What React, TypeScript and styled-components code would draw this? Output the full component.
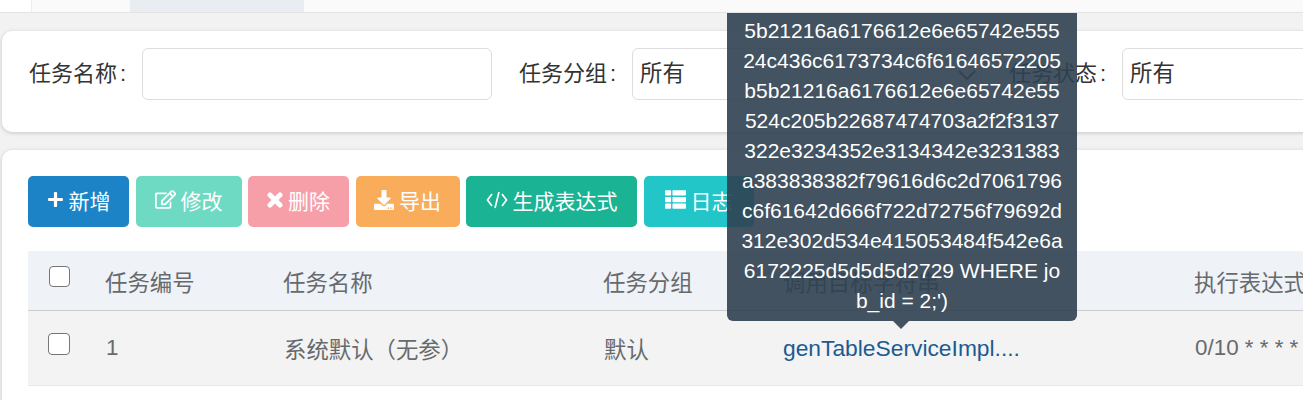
import { createGlobalStyle } from 'styled-components';
import styled from 'styled-components';
import { ReactNode } from 'react';
import { FaPlus, FaRegEdit, FaDownload, FaThList } from 'react-icons/fa';

const GlobalStyle = createGlobalStyle`
  html, body {
    margin: 0;
    padding: 0;
    width: 1303px;
    height: 400px;
    overflow: hidden;
    background: #f2f2f2;
    font-family: "Liberation Sans", "Noto Sans CJK SC", sans-serif;
    font-size: 22.4px;
    color: #676a6c;
  }
`;

const TabStrip = styled.div`
  display: flex;
  height: 12px;
  background: #fafafa;
  border-bottom: 1px solid #e3e3e3;
`;

const TabSpacer = styled.div`
  width: 31px;
  background: #fff;
  border-right: 1px solid #eee;
`;

const Tab = styled.div<{ $active?: boolean; $width: number }>`
  width: ${p => p.$width}px;
  background: ${p => (p.$active ? '#e9ecf1' : 'transparent')};
`;

const Content = styled.div`
  position: relative;
  height: 387px;
  overflow: hidden;
  padding: 18px 0 0 2px;
  box-sizing: border-box;
`;

const Card = styled.section`
  width: 1340px;
  background: #fff;
  border-radius: 10px;
  box-shadow: 0 1px 4px rgba(0, 0, 0, 0.18);
`;

const SearchCard = styled(Card)`
  display: flex;
  height: 101px;
  padding: 17px 0 0 27px;
  box-sizing: border-box;
  margin-bottom: 18px;
`;

const Field = styled.div`
  display: flex;
  align-items: flex-start;
  margin-right: 27px;
`;

const Label = styled.label`
  width: 113px;
  flex: none;
  height: 52px;
  line-height: 52px;
  font-size: 22px;
  color: #333;
`;

const Colon = styled.span`
  margin-left: 3px;
`;

const Input = styled.div`
  position: relative;
  width: 350px;
  height: 52px;
  box-sizing: border-box;
  border: 1px solid #ddd;
  border-radius: 6px;
  background: #fff;
  line-height: 50px;
  padding-left: 7px;
  color: #333;
`;

const Chevron = styled.svg`
  position: absolute;
  right: 5px;
  top: 21px;
  width: 18px;
  height: 10px;
`;

const ListCard = styled(Card)`
  height: 300px;
  padding: 26px 0 0 26px;
  box-sizing: border-box;
`;

const Toolbar = styled.div`
  display: flex;
  gap: 6.5px;
  margin-bottom: 24px;
`;

const Button = styled.button<{ $bg: string; $width: number }>`
  display: flex;
  align-items: center;
  justify-content: center;
  gap: 5px;
  width: ${p => p.$width}px;
  height: 51px;
  padding: 0 0 4px;
  border: 0;
  border-radius: 5px;
  background: ${p => p.$bg};
  color: #fff;
  font: inherit;
  font-size: 21px;
`;

const Table = styled.div`
  width: 1300px;
`;

const Row = styled.div<{ $head?: boolean }>`
  display: grid;
  grid-template-columns: 77px 178px 320px 180px 411px 134px;
  align-items: center;
  height: ${p => (p.$head ? 59 : 74)}px;
  background: ${p => (p.$head ? '#eff2f7' : '#f3f3f3')};
  border-bottom: 1px solid ${p => (p.$head ? '#ccc' : '#e7e7e7')};
  color: #676a6c;
`;

const CheckCell = styled.div<{ $inset: number }>`
  display: flex;
  padding: 0 0 8px ${p => p.$inset}px;
`;

const CheckBox = styled.span<{ $size: number }>`
  display: block;
  width: ${p => p.$size}px;
  height: ${p => p.$size}px;
  box-sizing: border-box;
  border: 1.5px solid #767676;
  border-radius: 4px;
  background: #fff;
`;

const Cell = styled.div`
  white-space: nowrap;
`;

const BodyCell = styled(Cell)`
  padding-left: 1px;
`;

const LinkCell = styled(Cell)`
  font-size: 22.8px;
  color: #1c5b92;
`;

const Tooltip = styled.div`
  position: absolute;
  left: 727px;
  top: 0;
  width: 350px;
  height: 308px;
  box-sizing: border-box;
  padding: 3px 12px 0;
  background: rgba(47, 64, 80, 0.9);
  border-radius: 0 0 6px 6px;
  color: #fff;
  font-size: 21px;
  line-height: 30px;
  text-align: center;
  white-space: nowrap;
  &::after {
    content: '';
    position: absolute;
    left: 166px;
    bottom: -8px;
    border-style: solid;
    border-width: 8px 8px 0;
    border-color: rgba(47, 64, 80, 0.9) transparent transparent;
  }
`;

interface ActionDef {
  label: string;
  icon: ReactNode;
  bg: string;
  width: number;
}

const TimesIcon = () => (
  <svg width="16" height="16" viewBox="0 0 16 16">
    <path d="M3 3 L13 13 M13 3 L3 13" stroke="#fff" strokeWidth="5" strokeLinecap="round" />
  </svg>
);

const CodeIcon = () => (
  <svg width="22" height="20" viewBox="0 0 22 20" fill="none" stroke="#fff" strokeWidth="1.7">
    <path d="M6 4 L1.5 10 L6 16 M16 4 L20.5 10 L16 16 M13 2 L9 18" />
  </svg>
);

const actions: ActionDef[] = [
  { label: '新增', icon: <FaPlus size={17} />, bg: '#1c84c6', width: 101 },
  { label: '修改', icon: <FaRegEdit size={21} />, bg: '#6fdac3', width: 106 },
  { label: '删除', icon: <TimesIcon />, bg: '#f79fa9', width: 101 },
  { label: '导出', icon: <FaDownload size={20} />, bg: '#f9ad5b', width: 104 },
  { label: '生成表达式', icon: <CodeIcon />, bg: '#1ab394', width: 171 },
  { label: '日志', icon: <FaThList size={21} />, bg: '#23c6c8', width: 110 },
];

const tooltipLines = [
  '5b21216a6176612e6e65742e555',
  '24c436c6173734c6f61646572205',
  'b5b21216a6176612e6e65742e55',
  '524c205b22687474703a2f2f3137',
  '322e3234352e3134342e3231383',
  'a383838382f79616d6c2d7061796',
  'c6f61642d666f722d72756f79692d',
  '312e302d534e415053484f542e6a',
  '6172225d5d5d5d2729 WHERE jo',
  "b_id = 2;')",
];

const headers = ['任务编号', '任务名称', '任务分组', '调用目标字符串', '执行表达式'];

export default function App() {
  return (
    <>
      <GlobalStyle />
      <TabStrip>
        <TabSpacer />
        <Tab $width={98} />
        <Tab $active $width={174} />
      </TabStrip>
      <Content>
        <SearchCard>
          <Field>
            <Label>任务名称<Colon>:</Colon></Label>
            <Input />
          </Field>
          <Field>
            <Label>任务分组<Colon>:</Colon></Label>
            <Input>
              所有
              <Chevron viewBox="0 0 18 10" fill="none" stroke="#555" strokeWidth="2">
                <path d="M1 1 L9 9 L17 1" />
              </Chevron>
            </Input>
          </Field>
          <Field>
            <Label>任务状态<Colon>:</Colon></Label>
            <Input>所有</Input>
          </Field>
        </SearchCard>
        <ListCard>
          <Toolbar>
            {actions.map(a => (
              <Button key={a.label} $bg={a.bg} $width={a.width}>
                {a.icon}
                {a.label}
              </Button>
            ))}
          </Toolbar>
          <Table>
            <Row $head>
              <CheckCell $inset={21}>
                <CheckBox $size={21} />
              </CheckCell>
              {headers.map(h => (
                <Cell key={h}>{h}</Cell>
              ))}
            </Row>
            <Row>
              <CheckCell $inset={20}>
                <CheckBox $size={22} />
              </CheckCell>
              <BodyCell>1</BodyCell>
              <BodyCell>系统默认（无参）</BodyCell>
              <BodyCell>默认</BodyCell>
              <LinkCell>genTableServiceImpl....</LinkCell>
              <BodyCell>0/10 * * * * ?</BodyCell>
            </Row>
          </Table>
        </ListCard>
        <Tooltip>
          {tooltipLines.map(line => (
            <div key={line}>{line}</div>
          ))}
        </Tooltip>
      </Content>
    </>
  );
}
